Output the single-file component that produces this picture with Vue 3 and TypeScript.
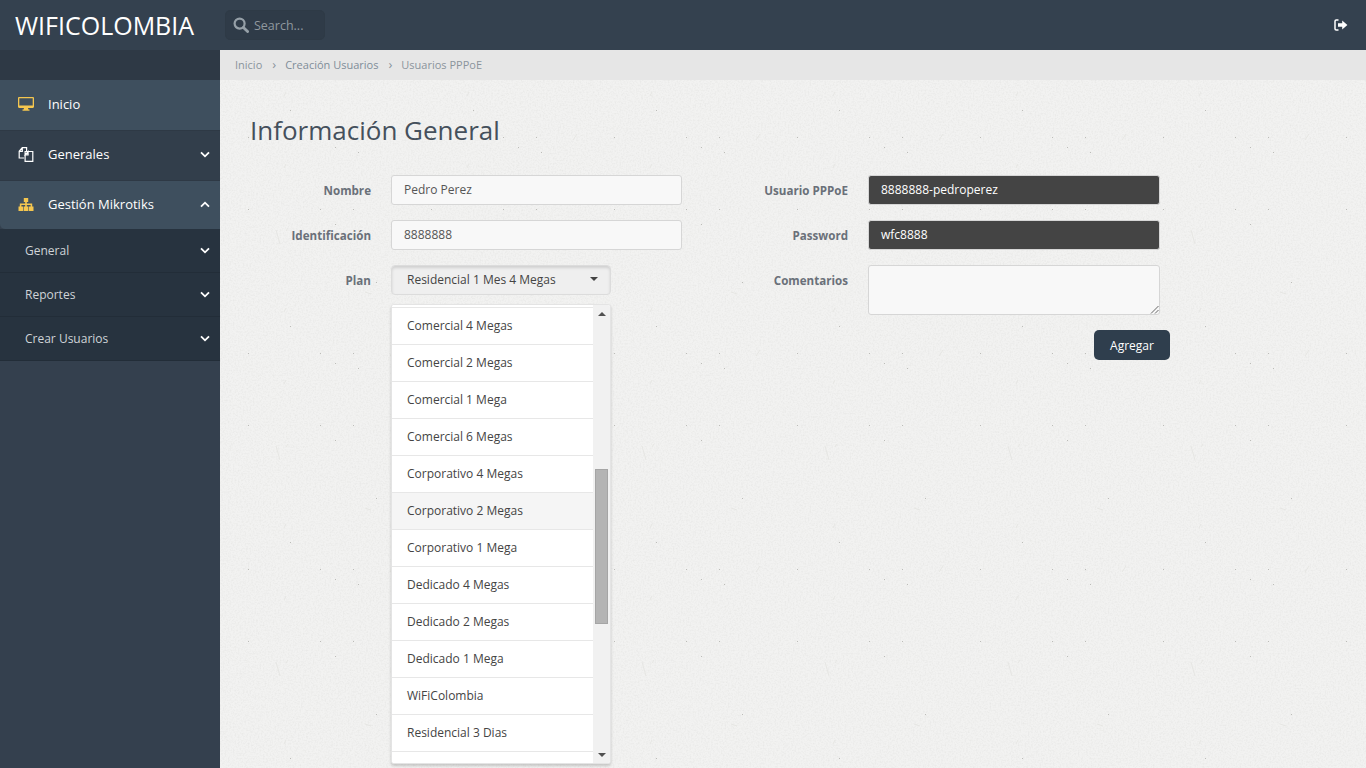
<script setup lang="ts">
const plans: string[] = ['Comercial 4 Megas','Comercial 2 Megas','Comercial 1 Mega','Comercial 6 Megas','Corporativo 4 Megas','Corporativo 2 Megas','Corporativo 1 Mega','Dedicado 4 Megas','Dedicado 2 Megas','Dedicado 1 Mega','WiFiColombia','Residencial 3 Dias']
const subs: string[] = ['General','Reportes','Crear Usuarios']
</script>

<template>
  <div class="app">
    <header class="top">
      <div class="brand">WIFICOLOMBIA</div>
      <div class="search">
        <svg class="search-ic" width="16" height="16" viewBox="0 0 16 16"><circle cx="6.6" cy="6.6" r="5" fill="none" stroke="#96a0a8" stroke-width="2.2"/><path d="M10.4 10.4L14.6 14.6" stroke="#96a0a8" stroke-width="2.8" stroke-linecap="round"/></svg>
        <span>Search...</span>
      </div>
      <svg class="logout" width="14" height="12" viewBox="0 0 14 12"><path d="M4.5 1H2.2C1.5 1 1 1.5 1 2.2v7.6C1 10.5 1.5 11 2.2 11h2.3" fill="none" stroke="#fff" stroke-width="1.5"/><path d="M4 4.2h4.2V1.600L13.400 6 8.200 10.400V7.800H4z" fill="#fff"/></svg>
    </header>
    <div class="body">
      <aside class="side">
        <div class="side-strip"></div>
        <a class="nav active first">
          <svg class="nav-ic" width="16" height="14" viewBox="0 0 16 14"><path fill="#f4c64f" fill-rule="evenodd" d="M1.2 0h13.600C15.500 0 16 .5 16 1.200v8.600c0 .7-.5 1.200-1.200 1.200H10l.4 1.500h1.100v1.200h-7v-1.200h1.100L6 11H1.200C.5 11 0 10.500 0 9.800V1.200C0 .5.500 0 1.200 0zM1.300 1.300V8.400h13.400V1.300z"/></svg>
          <span>Inicio</span>
        </a>
        <a class="nav">
          <svg class="nav-ic" width="15" height="15" viewBox="0 0 15 15"><path fill="none" stroke="#fff" stroke-width="1.200" d="M5.500 11H.7V4.300L3.800.7h4.300v3.400M3.800.9v3.400H.9M6.600 4.500h7.700v9.800H6.600zM6.600 7.800L9.600 4.600V7.800z"/></svg>
          <span>Generales</span>
          <svg class="chev" width="10" height="7" viewBox="0 0 10 7"><path d="M1 1.300L5 5.300 9 1.300" fill="none" stroke="#fff" stroke-width="1.800"/></svg>
        </a>
        <a class="nav active open">
          <svg class="nav-ic" width="15" height="13" viewBox="0 0 15 13"><path fill="#f4c64f" d="M5.300 0h4.400v4H8.300v1.500h5.400v3H15V13h-4.600V8.500h1.700V7H8.300v1.500h1.500V13H5.200V8.500h1.500V7H2.900v1.500h1.700V13H0V8.500h1.300v-3h5.400V4H5.300z"/></svg>
          <span>Gestión Mikrotiks</span>
          <svg class="chev" width="10" height="7" viewBox="0 0 10 7"><path d="M1 5.700L5 1.700 9 5.700" fill="none" stroke="#fff" stroke-width="1.800"/></svg>
        </a>
        <ul class="subs">
          <li v-for="s in subs" :key="s">
            <span>{{ s }}</span>
            <svg class="chev" width="10" height="7" viewBox="0 0 10 7"><path d="M1 1.300L5 5.300 9 1.300" fill="none" stroke="#fff" stroke-width="1.800"/></svg>
          </li>
        </ul>
      </aside>
      <main class="main">
        <svg class="paper" width="100%" height="100%">
          <defs>
            <filter id="grain" x="0" y="0" width="100%" height="100%"><feTurbulence type="fractalNoise" baseFrequency="0.6" numOctaves="2" seed="4"/><feColorMatrix values="0 0 0 0 0.6  0 0 0 0 0.6  0 0 0 0 0.58  0 0 0 0.5 -0.2"/></filter>
            <pattern id="fibres" width="183" height="216" patternUnits="userSpaceOnUse">
              <g fill="#bcbcb8">
                <rect x="28" y="87" width="1" height="1"/><rect x="100" y="87" width="1" height="1"/><rect x="133" y="87" width="1" height="1"/><rect x="115" y="97" width="1" height="1"/><rect x="138" y="102" width="1" height="1"/><rect x="156" y="16" width="1" height="1"/><rect x="28" y="159" width="1" height="1"/><rect x="100" y="159" width="1" height="1"/><rect x="133" y="159" width="1" height="1"/><rect x="115" y="174" width="1" height="1"/><rect x="70" y="60" width="1" height="1"/>
              </g>
              <g fill="none" stroke="#e6e6e3" stroke-width="1">
                <path d="M66 42l-2 4M66 114l-2 4M68 178l-2 3M56 180l4 14M145 26l6 2M170 90l4-6"/>
              </g>
            </pattern>
          </defs>
          <rect width="100%" height="100%" filter="url(#grain)"/>
          <rect width="100%" height="100%" fill="url(#fibres)"/>
        </svg>
        <nav class="crumbs">
          <span>Inicio</span><i>›</i><span class="mid">Creación Usuarios</span><i>›</i><span>Usuarios PPPoE</span>
        </nav>
        <section class="content">
          <h1>Información General</h1>
          <div class="form">
            <div class="col col-l">
              <label>Nombre</label>
              <div class="input">Pedro Perez</div>
              <label>Identificación</label>
              <div class="input">8888888</div>
              <label>Plan</label>
              <div class="select-wrap">
                <div class="select"><span>Residencial 1 Mes 4 Megas</span><b class="caret"></b></div>
                <div class="menu">
                  <ul class="list">
                    <li v-for="p in plans" :key="p" :class="{ hover: p === 'Corporativo 2 Megas' }">{{ p }}</li>
                  </ul>
                  <div class="bar">
                    <b class="up"></b>
                    <div class="thumb"></div>
                    <b class="down"></b>
                  </div>
                </div>
              </div>
            </div>
            <div class="col col-r">
              <label>Usuario PPPoE</label>
              <div class="input dark">8888888-pedroperez</div>
              <label>Password</label>
              <div class="input dark">wfc8888</div>
              <label>Comentarios</label>
              <div class="input area">
                <svg class="grip" width="9" height="9" viewBox="0 0 9 9"><path d="M1 8.500L8.500 1M5 8.500L8.500 5" stroke="#666" stroke-width="1" fill="none"/></svg>
              </div>
              <div class="actions"><button type="button">Agregar</button></div>
            </div>
          </div>
        </section>
      </main>
    </div>
  </div>
</template>

<style>
html, body { margin: 0; overflow: hidden; }
</style>

<style scoped>
.app { width: 1366px; height: 768px; display: flex; flex-direction: column; overflow: hidden; font-family: "Open Sans", sans-serif; font-size: 13px; color: #444; }
.top { height: 50px; flex: none; background: #34414f; display: flex; align-items: center; color: #fff; }
.brand { width: 225px; padding-left: 15px; box-sizing: border-box; font-size: 25px; margin-top: -1px; }
.search { width: 100px; height: 30px; box-sizing: border-box; border-radius: 5px; background: #2f3b48; border: 1px solid #2e3a46; display: flex; align-items: center; gap: 5px; padding-left: 7px; color: #8f989f; font-size: 12.5px; }
.logout { margin-left: auto; margin-right: 18px; }
.body { flex: 1; display: flex; min-height: 0; }
.side { width: 220px; flex: none; background: #34404e; color: #fff; }
.side-strip { height: 30px; background: #2e3945; }
.nav { height: 50px; box-sizing: border-box; display: flex; align-items: center; padding: 0 10px 3px 18px; font-size: 13px; background: #323e4b; border-top: 1px solid #2e3945; }
.nav.active { background: #3e4f5e; }
.nav.first { border-top-color: #3e4f5e; }
.nav.open { height: 49px; padding-bottom: 2px; border-bottom-left-radius: 5px; }
.nav-ic { width: 16px; margin-right: 14px; flex: none; }
.chev { margin-left: auto; flex: none; }
.subs { list-style: none; margin: 0; padding: 0; background: #27333f; }
.subs li { height: 44px; box-sizing: border-box; display: flex; align-items: center; padding: 0 10px 0 25px; font-size: 12px; color: #cfd4d8; border-bottom: 1px solid #222d38; }
.main { flex: 1; position: relative; background: #f2f2f1; min-width: 0; }
.paper { position: absolute; inset: 0; }
.crumbs { position: relative; height: 30px; background: #e6e6e6; display: flex; align-items: center; padding-left: 15px; padding-bottom: 1px; box-sizing: border-box; font-size: 11px; color: #8a949c; }
.crumbs i { font-style: normal; margin: 0 9px 0 10px; font-size: 13px; line-height: 1; }
.crumbs .mid { color: #7f8d99; }
.content { position: relative; padding: 32px 30px 0; }
h1 { margin: 0; font-size: 26px; font-weight: 400; line-height: 36px; color: #45505c; }
.form { display: flex; align-items: flex-start; margin-top: 27px; }
.col { display: grid; align-items: start; align-content: start; row-gap: 15px; column-gap: 20px; }
.col-l { width: 432px; grid-template-columns: 121px 291px; }
.col-r { width: 478px; margin-left: 4px; grid-template-columns: 162px 292px; }
label { height: 30px; text-align: right; font-weight: 700; font-size: 11.6px; line-height: 31px; color: #6a7079; }
.input { height: 30px; box-sizing: border-box; padding: 0 12px; line-height: 27px; background: #f8f8f8; border: 1px solid #d6d6d6; border-radius: 3px; font-size: 12px; color: #555; }
.input.dark { background: #444; border-color: #d6d6d6; color: #fff; }
.input.area { height: 50px; position: relative; }
.grip { position: absolute; right: 0; bottom: 0; }
.actions { grid-column: 2; display: flex; justify-content: flex-end; margin-right: -10px; }
button { width: 76px; height: 30px; border: 0; border-radius: 5px; background: #2f3e4d; color: #fff; font: 400 12px "Open Sans", sans-serif; padding: 0; }
.select-wrap { position: relative; width: 220px; }
.select { height: 30px; box-sizing: border-box; background: #efefef; border: 1px solid #dcdcdc; border-radius: 4px; box-shadow: inset 0 2px 3px rgba(0,0,0,.13); display: flex; align-items: center; padding: 0 12px 2px 15px; font-size: 12px; color: #444; }
.caret { margin-left: auto; border: 4px solid transparent; border-top-color: #444; border-bottom: 0; }
.menu { position: absolute; left: 0; top: 39px; width: 220px; height: 460px; box-sizing: border-box; display: flex; background: #fff; border: 1px solid #e4e4e4; border-radius: 3px; box-shadow: 0 2px 3px rgba(0,0,0,.18); overflow: hidden; }
.list { list-style: none; margin: 0; padding: 2px 0 0; width: 201px; flex: none; background: #fff; }
.list li { height: 37px; box-sizing: border-box; padding: 0 15px; line-height: 35px; border-top: 1px solid #e7e7e7; font-size: 12px; color: #444; }
.list li:last-child { border-bottom: 1px solid #e7e7e7; height: 38px; }
.list li.hover { background: #f5f5f5; }
.bar { position: relative; flex: 1; background: #f1f1f1; }
.thumb { position: absolute; left: 2px; right: 2px; top: 164px; height: 155px; background: #b4b4b4; border: 1px solid #a5a5a5; box-sizing: border-box; }
.up, .down { position: absolute; left: 5px; border: 4px solid transparent; }
.up { top: 7px; border-top: 0; border-bottom: 4px solid #505050; }
.down { bottom: 6px; border-bottom: 0; border-top: 4px solid #505050; }
</style>
